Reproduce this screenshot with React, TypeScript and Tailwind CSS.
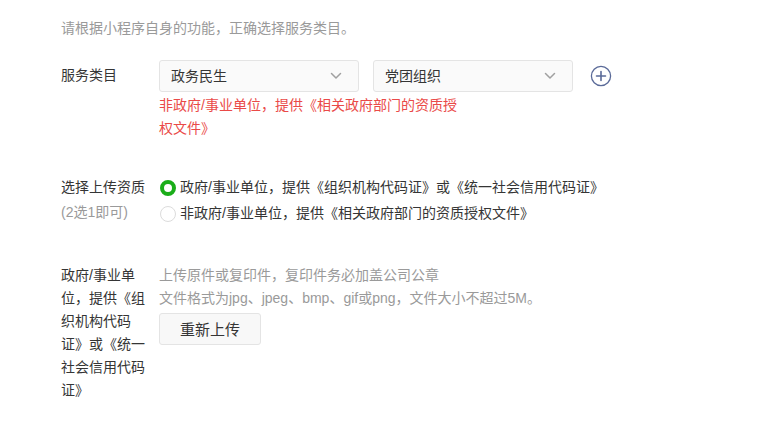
import React from "react";

const font = { fontFamily: '"Liberation Sans", "Noto Sans CJK SC", sans-serif' };

function Chevron() {
  return (
    <svg width="12" height="8" viewBox="0 0 12 8" fill="none">
      <path d="M1.5 1.5 L6 6 L10.5 1.5" stroke="#a0a0a0" strokeWidth="1.5" strokeLinecap="round" strokeLinejoin="round" />
    </svg>
  );
}

function Select({ value }: { value: string }) {
  return (
    <div className="w-[200px] h-[32px] flex items-center justify-between pl-[11px] pr-[16px] bg-[#fafafa] border border-[#e4e4e4] rounded-[3px] text-[14px] text-[#353535]">
      <span>{value}</span>
      <Chevron />
    </div>
  );
}

function Radio({ checked }: { checked?: boolean }) {
  return checked ? (
    <span className="w-[16px] h-[16px] rounded-full border-[4px] border-[#1aad19] bg-white shrink-0" />
  ) : (
    <span className="w-[16px] h-[16px] rounded-full border border-[#dcdcdc] bg-white shrink-0" />
  );
}

export default function App() {
  return (
    <div className="w-[766px] h-[444px] bg-white pl-[61px] pt-[17px] text-[14px] leading-[23px]" style={font}>
      <div className="text-[#9a9a9a]">请根据小程序自身的功能，正确选择服务类目。</div>

      <div className="flex mt-[20px]">
        <div className="w-[98px] pt-[4px] text-[#353535]">服务类目</div>
        <div className="flex flex-col">
          <div className="flex items-center">
            <Select value="政务民生" />
            <div className="ml-[14px]">
              <Select value="党团组织" />
            </div>
            <div className="ml-[17px]">
              <svg width="22" height="22" viewBox="0 0 22 22" fill="none">
                <circle cx="11" cy="11" r="9.6" stroke="#5a6a98" strokeWidth="1.3" />
                <path d="M11 6.5 V15.5 M6.5 11 H15.5" stroke="#5a6a98" strokeWidth="1.6" strokeLinecap="round" />
              </svg>
            </div>
          </div>
          <div className="w-[302px] mt-[2px] text-[#ea4a48]">
            非政府/事业单位，提供《相关政府部门的资质授权文件》
          </div>
        </div>
      </div>

      <div className="flex mt-[35px]">
        <div className="w-[98px] leading-[25px]">
          <div className="text-[#353535]">选择上传资质</div>
          <div className="text-[#9a9a9a]">(2选1即可)</div>
        </div>
        <div className="flex flex-col leading-[25px] text-[#353535]">
          <div className="flex items-center gap-[4px] pl-[1px]">
            <Radio checked />
            <span>政府/事业单位，提供《组织机构代码证》或《统一社会信用代码证》</span>
          </div>
          <div className="flex items-center gap-[4px] pl-[1px] mt-[1px]">
            <Radio />
            <span>非政府/事业单位，提供《相关政府部门的资质授权文件》</span>
          </div>
        </div>
      </div>

      <div className="flex mt-[38px]">
        <div className="w-[98px] pr-[12px] text-[#353535]">
          政府/事业单位，提供《组织机构代码证》或《统一社会信用代码证》
        </div>
        <div className="flex flex-col items-start text-[#9a9a9a]">
          <div>上传原件或复印件，复印件务必加盖公司公章</div>
          <div>文件格式为jpg、jpeg、bmp、gif或png，文件大小不超过5M。</div>
          <button className="mt-[3px] w-[102px] h-[32px] bg-[#f8f8f8] border border-[#e4e4e4] rounded-[3px] text-[15px] text-[#353535]">
            重新上传
          </button>
        </div>
      </div>
    </div>
  );
}
